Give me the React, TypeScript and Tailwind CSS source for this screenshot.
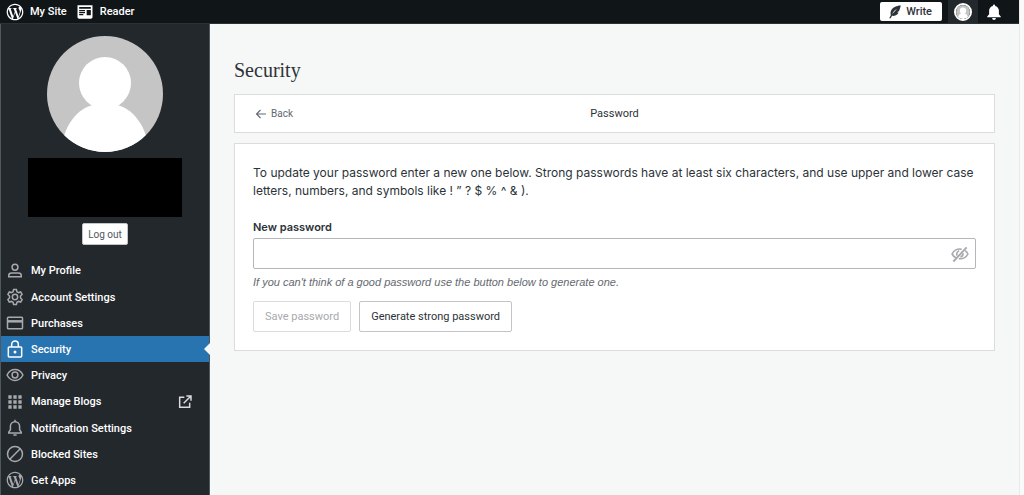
import type { ReactNode } from 'react';

const WORDPRESS_PATH =
  'M12 2C6.477 2 2 6.477 2 12s4.477 10 10 10 10-4.477 10-10S17.523 2 12 2zM3.5 12c0-1.232.264-2.402.736-3.459L8.291 19.65C5.456 18.272 3.5 15.365 3.5 12zm8.5 8.501c-.834 0-1.64-.12-2.401-.345l2.551-7.411 2.613 7.158a.718.718 0 00.061.117 8.497 8.497 0 01-2.824.481zm1.172-12.486c.512-.026.973-.08.973-.08.458-.054.404-.727-.054-.701 0 0-1.377.109-2.266.109-.835 0-2.24-.109-2.24-.109-.458-.026-.512.674-.054.701 0 0 .434.054.892.081l1.324 3.629-1.86 5.579-3.096-9.208c.512-.027.973-.081.973-.081.458-.054.403-.727-.055-.701 0 0-1.376.109-2.265.109-.16 0-.347-.004-.547-.01A8.491 8.491 0 0112 3.5c2.213 0 4.228.846 5.74 2.232-.037-.002-.072-.007-.11-.007-.835 0-1.427.727-1.427 1.509 0 .701.404 1.293.835 1.994.323.566.701 1.293.701 2.344 0 .727-.28 1.572-.647 2.748l-.848 2.833-3.072-9.138zm3.101 11.332l2.596-7.506c.485-1.213.646-2.182.646-3.045 0-.313-.021-.603-.057-.874A8.455 8.455 0 0120.5 12a8.493 8.493 0 01-4.227 7.347z';

interface IconProps {
  children: ReactNode;
  className?: string;
}

const LineIcon = ({ children, className = 'size-5' }: IconProps) => (
  <svg
    viewBox="0 0 24 24"
    className={`shrink-0 ${className}`}
    fill="none"
    stroke="currentColor"
    strokeWidth="1.8"
    aria-hidden="true"
  >
    {children}
  </svg>
);

const SolidIcon = ({ children, className = 'size-5' }: IconProps) => (
  <svg viewBox="0 0 24 24" className={`shrink-0 ${className}`} fill="currentColor" aria-hidden="true">
    {children}
  </svg>
);

const Avatar = ({ className }: { className: string }) => (
  <svg viewBox="0 0 116 116" className={className} aria-hidden="true">
    <defs>
      <clipPath id="avatar-clip">
        <circle cx="58" cy="58" r="58" />
      </clipPath>
    </defs>
    <g clipPath="url(#avatar-clip)">
      <rect width="116" height="116" fill="#c5c5c5" />
      <circle cx="58" cy="47" r="26" fill="#fff" />
      <path d="M14 116c2-28 18-44 32-47h24c14 3 30 19 32 47z" fill="#fff" />
    </g>
  </svg>
);

interface NavItem {
  label: string;
  icon: ReactNode;
  active?: boolean;
  external?: boolean;
}

const navItems: NavItem[] = [
  {
    label: 'My Profile',
    icon: (
      <LineIcon>
        <circle cx="12" cy="7.5" r="3.5" />
        <path d="M4.500 19v-1.500c0-2 1.500-3 3.500-3h8c2 0 3.500 1 3.500 3V19z" />
      </LineIcon>
    ),
  },
  {
    label: 'Account Settings',
    icon: (
      <LineIcon>
        <circle cx="12" cy="12" r="3.2" />
        <path d="M10.300 3h3.400l.6 2.600 2 1.100 2.500-.8 1.700 3-1.900 1.900v2.400l1.900 1.900-1.700 3-2.500-.8-2 1.100-.6 2.600h-3.400l-.6-2.600-2-1.100-2.500.8-1.700-3 1.900-1.900v-2.400L3.500 8.900l1.700-3 2.500.8 2-1.100z" />
      </LineIcon>
    ),
  },
  {
    label: 'Purchases',
    icon: (
      <LineIcon>
        <rect x="3" y="5" width="18" height="14" rx="1" />
        <path d="M3 10h18" strokeWidth="3" />
      </LineIcon>
    ),
  },
  {
    label: 'Security',
    active: true,
    icon: (
      <LineIcon>
        <rect x="4" y="9.500" width="16" height="12" rx="1" />
        <path d="M8 9.500V6.500a4 4 0 0 1 8 0v3" />
        <circle cx="12" cy="15.500" r="1.800" fill="currentColor" stroke="none" />
      </LineIcon>
    ),
  },
  {
    label: 'Privacy',
    icon: (
      <LineIcon>
        <path d="M2.500 12c2-4 5.500-6.500 9.500-6.500s7.500 2.500 9.500 6.500c-2 4-5.500 6.500-9.500 6.500S4.500 16 2.500 12z" />
        <circle cx="12" cy="12" r="3.500" />
      </LineIcon>
    ),
  },
  {
    label: 'Manage Blogs',
    external: true,
    icon: (
      <SolidIcon>
        <path d="M4 4h4v4H4zm6 0h4v4h-4zm6 0h4v4h-4zM4 10h4v4H4zm6 0h4v4h-4zm6 0h4v4h-4zM4 16h4v4H4zm6 0h4v4h-4zm6 0h4v4h-4z" />
      </SolidIcon>
    ),
  },
  {
    label: 'Notification Settings',
    icon: (
      <LineIcon>
        <path d="M4.500 18h15v-1L17.500 14v-4a5.500 5.500 0 0 0-11 0v4l-2 3z" />
        <path d="M12 4.500V2M10 20.500h4" />
      </LineIcon>
    ),
  },
  {
    label: 'Blocked Sites',
    icon: (
      <LineIcon>
        <circle cx="12" cy="12" r="9" />
        <path d="M5.500 18.500l13-13" />
      </LineIcon>
    ),
  },
  {
    label: 'Get Apps',
    icon: (
      <SolidIcon>
        <path d={WORDPRESS_PATH} />
      </SolidIcon>
    ),
  },
];

const Masterbar = () => (
  <header className="flex h-6 items-center border-b border-[#2c3338] bg-[#101517] pl-[5px] font-['Roboto',sans-serif] text-[11px] font-medium text-white">
    <a href="#" className="flex items-center gap-[5px]">
      <SolidIcon>
        <path d={WORDPRESS_PATH} />
      </SolidIcon>
      <span className="pt-0.5">My Site</span>
    </a>
    <a href="#" className="ml-2 flex items-center gap-[5px]">
      <SolidIcon>
        <path d="M3 4v14c0 1.100.9 2 2 2h14c1.100 0 2-.9 2-2V4H3zm7 12H5v-1.500h5V16zm2-2.500H5V12h7v1.500zm0-2.500H5V9.500h7V11zm7 5h-5V9.500h5V16zm0-8H5V6h14v2z" />
      </SolidIcon>
      <span className="pt-0.5">Reader</span>
    </a>
    <button className="ml-auto flex h-[19px] items-center gap-1 rounded-xs bg-white pr-2.5 pl-2 text-[#2c3338]">
      <SolidIcon className="size-3.5">
        <path d="M22 1C14 1 6 5 4.500 12c-.4 2 0 4 .5 5L2 22.500h2.500L7 18.500c6 1 10-2 11-6l-3 .3 4-2.500c1-2.500 2-6 3-9.300zM16 7c-3 2-6.500 6-8.500 9C8 12 12 8.500 16 7z" fillRule="evenodd" />
      </SolidIcon>
      <span className="pt-0.5">Write</span>
    </button>
    <a href="#" aria-label="Me" className="ml-1.5 flex h-full w-[30px] items-center justify-center bg-[#23282d]">
      <Avatar className="size-[18px] rounded-full border-2 border-white" />
    </a>
    <a href="#" aria-label="Notifications" className="mr-4 ml-[7px]">
      <SolidIcon className="size-[18px]">
        <path d="M12 2a1.500 1.500 0 0 0-1.500 1.500v.4C7.500 4.600 5.500 7 5.500 10v5L3 18v1h18v-1l-2.500-3v-5c0-3-2-5.400-5-6.100v-.4A1.500 1.500 0 0 0 12 2zM9.500 20a2.500 2.500 0 0 0 5 0z" />
      </SolidIcon>
    </a>
  </header>
);

const Sidebar = () => (
  <aside className="flex w-[210px] shrink-0 flex-col border-x border-[#50575e] bg-[#23282d] font-['Roboto',sans-serif]">
    <div className="flex flex-col items-center pt-3">
      <Avatar className="size-[116px]" />
      <div className="mt-1.5 h-[59px] w-[154px] bg-black" />
      <button className="mt-1.5 h-[22px] rounded-xs border border-[#c3c4c7] bg-white px-[5px] text-[10px] text-[#50575e]">
        Log out
      </button>
    </div>
    <nav className="mt-3 grid h-[236px] auto-rows-fr">
      {navItems.map((item) => (
        <a
          key={item.label}
          href="#"
          className={`relative flex items-center gap-1.5 pt-px pl-1 text-[11px] font-medium text-white ${
            item.active ? 'bg-[#2874b0]' : ''
          }`}
        >
          <span className={item.active ? 'text-white' : 'text-[#a7aaad]'}>{item.icon}</span>
          <span className="pt-0.5">{item.label}</span>
          {item.external && (
            <LineIcon className="mr-4 ml-auto size-4 text-[#dcdcde]">
              <path d="M11 5H4v15h15v-7M14 3h7v7M21 3L10 14" strokeWidth="2.200" />
            </LineIcon>
          )}
          {item.active && (
            <svg viewBox="0 0 6 12" className="absolute -right-px h-3 w-1.5" aria-hidden="true">
              <path d="M6 0v12L0 6z" fill="#f6f7f7" />
            </svg>
          )}
        </a>
      ))}
    </nav>
  </aside>
);

const PasswordForm = () => (
  <form
    className="mt-2.5 border border-[#dcdcde] bg-white px-[18px] pt-5 pb-[18px]"
    onSubmit={(e) => e.preventDefault()}
  >
    <p className="text-[12px] leading-[18px]">
      To update your password enter a new one below. Strong passwords have at least six characters, and use
      upper and lower case letters, numbers, and symbols like ! ” ? $ % ^ &amp; ).
    </p>
    <label htmlFor="password" className="mt-[18px] block text-[11px] leading-[18px] font-semibold">
      New password
    </label>
    <div className="relative mt-0.5">
      <input
        id="password"
        type="password"
        className="block h-[31px] w-full rounded-xs border border-[#b4b6b8] bg-white px-3 pr-9 text-[12px]"
      />
      <button
        type="button"
        aria-label="Show password"
        className="absolute inset-y-0 right-1.5 flex items-center text-[#a7aaad]"
      >
        <LineIcon>
          <path d="M14 6.500C9 5 4.500 8 2.500 12c1 1.800 2.500 3.500 4.500 4.500M18 8c1.500 1 2.700 2.400 3.500 4-2 4-6.500 6.500-11 5.500M8.500 14c-1-2.500 0-5 2.500-6M15.500 11c.3 2-1 4-3 4.500" strokeWidth="2" />
          <path d="M4 21L20 4" strokeWidth="2.200" />
        </LineIcon>
      </button>
    </div>
    <p className="mt-1 font-['Liberation_Sans',sans-serif] text-[11px] leading-[18px] text-[#646970] italic">
      If you can't think of a good password use the button below to generate one.
    </p>
    <div className="mt-2.5 flex gap-2 font-['Roboto',sans-serif] text-[11px]">
      <button
        type="submit"
        disabled
        className="h-[31px] rounded-xs border border-[#dcdcde] bg-white px-[11px] pt-0.5 text-[#a7aaad]"
      >
        Save password
      </button>
      <button
        type="button"
        className="h-[31px] rounded-xs border border-[#c3c4c7] bg-white px-[11px] pt-0.5 text-[#2c3338]"
      >
        Generate strong password
      </button>
    </div>
  </form>
);

const App = () => (
  <div className="flex min-h-screen bg-[#f6f7f7] font-['Inter',sans-serif] text-[#2c3338]">
    <div className="flex min-w-0 flex-1 flex-col">
      <Masterbar />
      <div className="flex flex-1">
        <Sidebar />
        <main className="min-w-0 flex-1 px-6">
          <h1 className="mt-8 font-['Liberation_Serif',serif] text-[20px] leading-7">Security</h1>
          <div className="mt-2.5 grid h-[39px] grid-cols-[1fr_auto_1fr] items-center border border-[#dcdcde] bg-white px-5 font-['Roboto',sans-serif]">
            <a href="#" className="flex items-center gap-1 text-[10px] text-[#646970]">
              <LineIcon className="size-3">
                <path d="M22 12H3M11 4l-8 8 8 8" strokeWidth="2.200" />
              </LineIcon>
              Back
            </a>
            <h2 className="pt-0.5 text-[11px]">Password</h2>
          </div>
          <PasswordForm />
        </main>
      </div>
    </div>
    {/* Scroll gutter */}
    <div className="w-[5px] shrink-0 border-l border-[#e8eaeb] bg-[#fafafa]" />
  </div>
);

export default App;
